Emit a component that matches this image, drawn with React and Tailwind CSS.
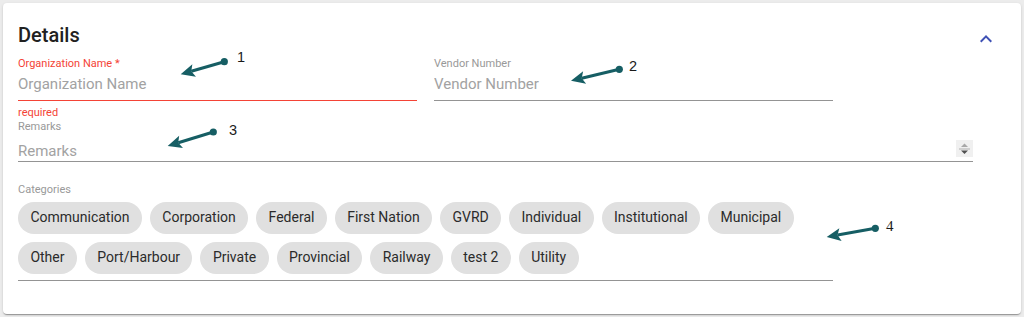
const chips = [
  "Communication",
  "Corporation",
  "Federal",
  "First Nation",
  "GVRD",
  "Individual",
  "Institutional",
  "Municipal",
  "Other",
  "Port/Harbour",
  "Private",
  "Provincial",
  "Railway",
  "test 2",
  "Utility",
]

// annotation arrow: dot at (x1,y1), head at (x2,y2)
function Arrow({ x1, y1, x2, y2 }) {
  const dx = x2 - x1
  const dy = y2 - y1
  const len = Math.hypot(dx, dy)
  const ux = dx / len
  const uy = dy / len
  const bx = x2 - ux * 14
  const by = y2 - uy * 14
  const px = -uy * 6.5
  const py = ux * 6.5
  const nx = bx + ux * 3
  const ny = by + uy * 3
  return (
    <g fill="#165e64">
      <line x1={x1} y1={y1} x2={nx} y2={ny} stroke="#165e64" strokeWidth="3" />
      <circle cx={x1} cy={y1} r="3.6" />
      <polygon points={`${x2},${y2} ${bx + px},${by + py} ${nx},${ny} ${bx - px},${by - py}`} />
    </g>
  )
}

function Field({ label, required, error, width }) {
  return (
    <div className={width}>
      <div className={`text-[11px] leading-[13px] h-[13px] ${error ? "text-[#f44336]" : "text-[#999]"}`}>
        {label}{required && " *"}
      </div>
      <div className={`mt-[4px] pb-[6px] border-b ${error ? "border-[#f44336]" : "border-[#949494]"}`}>
        <input
          placeholder={label}
          className="block w-full h-[20px] text-[15px] leading-[20px] bg-transparent outline-none font-['Roboto',sans-serif] placeholder:text-[#a2a2a2]"
        />
      </div>
    </div>
  )
}

export default function App() {
  return (
    <div className="relative w-[1024px] h-[317px] bg-[#ececec] p-[3px] font-['Roboto',sans-serif]">
      <div className="w-[1018px] h-[311px] bg-white rounded-[4px] pl-[15px] pt-[20px] shadow-[0_2px_1px_-1px_rgba(0,0,0,0.2),0_1px_1px_0_rgba(0,0,0,0.14),0_1px_3px_0_rgba(0,0,0,0.12)]">
        <div className="h-[24px] flex justify-between items-start pr-[23px]">
          <h2 className="text-[20px] leading-[24px] font-medium text-[#212121]">Details</h2>
          <svg className="mt-[4px] shrink-0" width="24" height="24" viewBox="0 0 24 24">
            <path d="M12 8l-6 6 1.41 1.41L12 10.83l4.59 4.58L18 14z" fill="#3f51b5" />
          </svg>
        </div>

        <div className="mt-[10px] flex gap-[17px]">
          <Field label="Organization Name" required error width="w-[399px]" />
          <Field label="Vendor Number" width="w-[399px]" />
        </div>
        <div className="mt-[5px] text-[11px] leading-[13px] text-[#f44336]">required</div>

        <div className="mt-[1px] text-[11px] leading-[13px] text-[#999]">Remarks</div>
        <div className="mt-[8px] w-[955px] flex items-start border-b border-[#949494]">
          <input
            placeholder="Remarks"
            className="flex-1 block h-[20px] text-[15px] leading-[20px] bg-transparent outline-none font-['Roboto',sans-serif] placeholder:text-[#a2a2a2]"
          />
          <svg className="-mt-[1px]" width="17" height="17" viewBox="0 0 17 17">
            <rect width="17" height="17" fill="#f0f0f0" />
            <path d="M5 7h7L8.5 3.5z" fill="#a8a8a8" />
            <rect x="3" y="8.5" width="11" height="1" fill="#b0b0b0" />
            <path d="M5 10.5h7L8.5 14z" fill="#505050" />
          </svg>
        </div>

        <div className="mt-[21px] text-[11px] leading-[13px] text-[#999]">Categories</div>
        <div className="mt-[6px] w-[815px] pb-[6px] flex flex-wrap gap-2 border-b border-[#949494]">
          {chips.map((c) => (
            <span
              key={c}
              className="h-[32px] px-[12.4px] rounded-full bg-[#e0e0e0] text-[14px] leading-[31px] text-[#2b2b2b]"
            >
              {c}
            </span>
          ))}
        </div>
      </div>

      <svg className="absolute inset-0 pointer-events-none" width="1024" height="317">
        <Arrow x1={224.3} y1={61.7} x2={180.7} y2={74.3} />
        <Arrow x1={619.3} y1={69.3} x2={571} y2={80.7} />
        <Arrow x1={213.3} y1={132} x2={167.7} y2={146} />
        <Arrow x1={875.3} y1={228.3} x2={826.7} y2={237} />
        <g fontSize="14.5" fill="#1a1a1a">
          <text x="237" y="62" fontFamily="Liberation Sans, sans-serif">1</text>
          <text x="629" y="71" fontFamily="Liberation Sans, sans-serif">2</text>
          <text x="229" y="135" fontFamily="Liberation Sans, sans-serif">3</text>
          <text x="886" y="230.5" fontFamily="Liberation Serif, serif" fontSize="15">4</text>
        </g>
      </svg>
    </div>
  )
}
